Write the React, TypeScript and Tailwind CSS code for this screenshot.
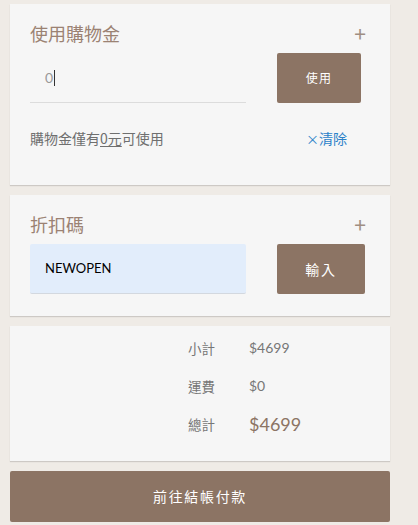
import React from "react";

const cjk = "font-['Noto_Sans_CJK_TC','Noto_Sans',sans-serif]";
const num = "font-['Lato','Noto_Sans_CJK_TC',sans-serif]";

function Card({ className, children }: { className?: string; children: React.ReactNode }) {
  return (
    <div className={`bg-[#f6f6f6] shadow-[0_1px_1px_rgba(0,0,0,0.14)] ${className ?? ""}`}>
      {children}
    </div>
  );
}

function CardTitle({ title }: { title: string }) {
  return (
    <div className="flex h-7 items-center justify-between pr-[24px]">
      <span className="text-[18px] leading-7 text-[#9b8273]">{title}</span>
      <span className="text-[21px] leading-7 text-[#a08e82]">+</span>
    </div>
  );
}

export default function App() {
  return (
    <div className={`min-h-screen w-[418px] bg-[#efebe6] pt-1 pl-[10px] ${cjk}`}>
      <div className="flex w-[380px] flex-col">
        {/* 購物金 */}
        <Card className="pt-[15px] pb-[37px] pl-5">
          <CardTitle title="使用購物金" />
          <div className="mt-[6px] flex items-center">
            <div className="flex h-[50px] w-[216px] items-center border-b border-[#dcdcdc] pl-[15px] text-[14px] text-[#999]">
              <span className={num}>0</span>
              <span className="ml-px h-[16px] w-px bg-[#333]" />
            </div>
            <button className="ml-[31px] flex h-[50px] w-[84px] items-center justify-center rounded-[2px] bg-[#8c7464] text-[12px] tracking-[0.1em] text-white">
              使用
            </button>
          </div>
          <div className="mt-[25px] flex h-5 items-center pr-[43px] text-[14px] leading-5 text-[#6f6f6f]">
            <span>
              購物金僅有<span className="underline underline-offset-2">0元</span>可使用
            </span>
            <span className="ml-auto text-[14px] text-[#2b82c9]">
              <span className="text-[13px]">×</span>清除
            </span>
          </div>
        </Card>

        {/* 折扣碼 */}
        <Card className="mt-[10px] pt-[15px] pb-[22px] pl-5">
          <CardTitle title="折扣碼" />
          <div className="mt-[6px] flex items-center">
            <div className={`flex h-[50px] w-[216px] items-center rounded-[2px] border-b border-[#d3d8df] bg-[#e2edfb] pl-[15px] text-[13px] text-black ${num}`}>
              NEWOPEN
            </div>
            <button className="ml-[31px] flex h-[50px] w-[88px] items-center justify-center rounded-[2px] bg-[#8c7464] text-[14px] tracking-[0.12em] text-white">
              輸入
            </button>
          </div>
        </Card>

        {/* 小計 */}
        <Card className="mt-[10px] pt-[12px] pb-[27px]">
          <div className="flex flex-col gap-[18px] pl-[178px] text-[13.5px] leading-5 text-[#777]">
            <div className="flex h-5 items-center">
              <span className="w-[61px]">小計</span>
              <span className={`${num} text-[14px] leading-5`}>$4699</span>
            </div>
            <div className="flex h-5 items-center">
              <span className="w-[61px]">運費</span>
              <span className={`${num} text-[14px] leading-5`}>$0</span>
            </div>
            <div className="flex h-5 items-center">
              <span className="w-[61px]">總計</span>
              <span className={`${num} text-[18px] leading-5 text-[#8c7464]`}>$4699</span>
            </div>
          </div>
        </Card>

        <button className="mt-[10px] flex h-[51px] w-full items-center justify-center rounded-[2px] bg-[#8c7464] text-[14px] tracking-[0.12em] text-white">
          前往結帳付款
        </button>
      </div>
    </div>
  );
}
